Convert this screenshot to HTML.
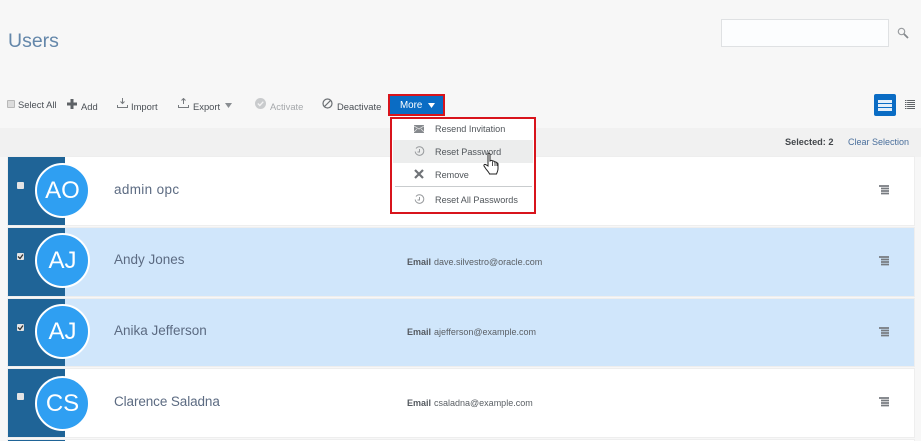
<!DOCTYPE html>
<html style="height:441px;overflow:hidden"><head><meta charset="utf-8">
<style>
html,body{margin:0;padding:0}
body{width:921px;height:441px;overflow:hidden;background:#f7f7f7;position:relative;font-family:"Liberation Sans",sans-serif;color:#4a4f55}
#w{position:absolute;left:0;top:0;width:921px;height:441px;overflow:hidden}
.a{position:absolute;white-space:nowrap}
.t{font-size:9.4px;line-height:12px;color:#4a4f55}
.row{position:absolute;left:8px;width:906px;height:67px;background:#fff;box-shadow:0 0 0 1px #eeeeee}
.row.s{background:#d0e6fb}
.band{position:absolute;left:0;top:0;width:57px;height:100%;background:#1f6497}
.cb{position:absolute;left:8.5px;top:25px;width:7px;height:7px;background:#e4e4e4;border-radius:1px;font-size:7px}
.av{position:absolute;left:27px;top:6px;width:51px;height:51px;border:2px solid #fff;border-radius:50%;background:#2f9ff2;color:#fff;font-size:24px;line-height:52px;text-align:center}
.n{position:absolute;left:106px;top:24px;font-size:13.5px;line-height:17px;color:#5c6b82;white-space:nowrap}
.e{position:absolute;left:399px;top:28px;font-size:9px;line-height:12px;color:#5a5f64;white-space:nowrap}
.e b{color:#555a60;margin-right:3px}
.mi{font-size:9.1px;line-height:12px;color:#50555a;position:absolute;white-space:nowrap}
</style></head><body><div id="w">
<div class="a" style="left:8px;top:28px;font-size:19.5px;line-height:26px;color:#6487aa">Users</div>

<div class="a" style="left:721px;top:19px;width:166px;height:26px;background:#fcfdfe;border:1px solid #dfe1e3"></div>
<svg class="a" style="left:897px;top:27px" width="12" height="12" viewBox="0 0 12 12"><circle cx="4.500" cy="4.500" r="3.200" fill="none" stroke="#9a9da0" stroke-width="1.200"/><path d="M7 7l4 4" stroke="#85898d" stroke-width="1.800"/></svg>

<div class="a" style="left:0;top:128px;width:921px;height:29px;background:#f1f1f1"></div>

<!-- toolbar -->
<div class="a" style="left:7px;top:100px;width:6px;height:6px;background:#dcdcdc;border:1px solid #b8b8b8;border-radius:1px"></div>
<div class="a t" style="left:18px;top:99px">Select All</div>
<svg class="a" style="left:66px;top:98px" width="12" height="12" viewBox="0 0 12 12"><path d="M4.500 1h3v3.500h3.500v3h-3.500v3.500h-3v-3.500h-3.500v-3h3.500z" fill="#5e6266"/></svg>
<div class="a t" style="left:81px;top:101px">Add</div>
<svg class="a" style="left:117px;top:98px" width="11" height="11" viewBox="0 0 11 11"><path d="M5.500 0v5M3.500 3.500l2 2 2-2M.5 7v2.500h10V7" fill="none" stroke="#777b7f" stroke-width="1"/></svg>
<div class="a t" style="left:131px;top:101px">Import</div>
<svg class="a" style="left:178px;top:98px" width="11" height="11" viewBox="0 0 11 11"><path d="M5.500 6V1M3.500 2.500l2-2 2 2M.5 7v2.500h10V7" fill="none" stroke="#777b7f" stroke-width="1"/></svg>
<div class="a t" style="left:193px;top:101px">Export</div>
<svg class="a" style="left:225px;top:103px" width="7" height="5"><path d="M0 0h7L3.500 5z" fill="#8a8e92"/></svg>
<svg class="a" style="left:255px;top:98px" width="11" height="11" viewBox="0 0 11 11"><circle cx="5.500" cy="5.500" r="5.500" fill="#c9cbcd"/><path d="M2.800 5.500l2 2 3.500-3.800" fill="none" stroke="#f3f3f3" stroke-width="1.300"/></svg>
<div class="a t" style="left:270px;top:101px;color:#a5a8ab">Activate</div>
<svg class="a" style="left:322px;top:98px" width="11" height="11" viewBox="0 0 11 11"><circle cx="5.500" cy="5.500" r="4.500" fill="none" stroke="#6a6e72" stroke-width="1.200"/><path d="M2.500 8.500l6-6" stroke="#6a6e72" stroke-width="1.200"/></svg>
<div class="a t" style="left:337px;top:101px">Deactivate</div>

<div class="a" style="left:388px;top:94px;width:53px;height:18px;border:2px solid #d8141c;background:#0a6cc4"></div>
<div class="a" style="left:400px;top:100px;font-size:9.800px;line-height:12px;color:#fff">More</div>
<svg class="a" style="left:428px;top:103px" width="7" height="5"><path d="M0 0h7L3.500 5z" fill="#fff"/></svg>

<div class="a" style="left:785px;top:136px;font-size:9.200px;line-height:12px;font-weight:bold;color:#44484c">Selected: 2</div>
<div class="a" style="left:848px;top:136px;font-size:9px;line-height:12px;color:#4a6f9c">Clear Selection</div>

<div class="a" style="left:874px;top:94px;width:22px;height:22px;border-radius:2px;background:#0a6cc4"></div>
<div class="a" style="left:878px;top:100px;width:14px;height:2.500px;background:#e4effa;box-shadow:0 4px 0 #e4effa,0 8px 0 #e4effa"></div>
<svg class="a" style="left:905px;top:100px" width="10" height="10"><path d="M0 .5h10M0 2.500h10M0 4.500h10M0 6.500h10M0 8.500h10" stroke="#5f6367" stroke-width="1" stroke-dasharray="1.500 .6 8"/></svg>

<!-- rows -->
<div class="row" style="top:157px;height:68px"><div class="band"></div><div class="cb"></div><div class="av">AO</div><div class="n" style="letter-spacing:.35px">admin opc</div></div>
<div class="row s" style="top:228px;height:68px"><div class="band"></div><div class="cb"><svg style="position:absolute;left:0;top:0" width="7" height="7"><path d="M1 3.500l2 2 3-4" fill="none" stroke="#333" stroke-width="1.300"/></svg></div><div class="av" style="top:5px">AJ</div><div class="n" style="top:23px">Andy Jones</div><div class="e"><b>Email</b>dave.silvestro@oracle.com</div></div>
<div class="row s" style="top:299px;height:67px"><div class="band"></div><div class="cb"><svg style="position:absolute;left:0;top:0" width="7" height="7"><path d="M1 3.500l2 2 3-4" fill="none" stroke="#333" stroke-width="1.300"/></svg></div><div class="av" style="top:5px">AJ</div><div class="n" style="top:23px">Anika Jefferson</div><div class="e" style="top:27px"><b>Email</b>ajefferson@example.com</div></div>
<div class="row" style="top:369px;height:68px"><div class="band"></div><div class="cb" style="top:24px"></div><div class="av" style="top:7px">CS</div><div class="n" style="letter-spacing:-.1px">Clarence Saladna</div><div class="e"><b>Email</b>csaladna@example.com</div></div>
<div class="row" style="top:440px;height:1px"><div class="band"></div></div>

<!-- row menu icons -->
<svg class="a" style="left:879px;top:185px" width="11" height="10"><path d="M0 1h10M2 3.500h8M2 6h8M2 8.500h8" stroke="#777b80" stroke-width="1.800"/></svg>
<svg class="a" style="left:879px;top:256px" width="11" height="10"><path d="M0 1h10M2 3.500h8M2 6h8M2 8.500h8" stroke="#777b80" stroke-width="1.800"/></svg>
<svg class="a" style="left:879px;top:327px" width="11" height="10"><path d="M0 1h10M2 3.500h8M2 6h8M2 8.500h8" stroke="#777b80" stroke-width="1.800"/></svg>
<svg class="a" style="left:879px;top:397px" width="11" height="10"><path d="M0 1h10M2 3.500h8M2 6h8M2 8.500h8" stroke="#777b80" stroke-width="1.800"/></svg>

<!-- dropdown -->
<div class="a" style="left:390px;top:117px;width:142px;height:93px;border:2px solid #d8141c;background:#fff">
  <div class="a" style="left:1px;top:21px;width:140px;height:23px;background:#eceded"></div>
  <svg class="a" style="left:22px;top:6px" width="10" height="8"><rect width="10" height="8" fill="#85898d"/><path d="M0 1l5 3 5-3M0 7l3-3M10 7l-3-3" stroke="#e0e0e0" fill="none" stroke-width=".8"/></svg>
  <svg class="a" style="left:22px;top:27px" width="11" height="11" viewBox="0 0 11 11"><path d="M2 2.500A4.300 4.300 0 1 1 1.200 5.500" fill="none" stroke="#989b9e" stroke-width="1"/><path d="M5.500 3v3h-2" fill="none" stroke="#989b9e"/></svg>
  <svg class="a" style="left:22px;top:50px" width="10" height="10"><path d="M1 1l8 8M9 1l-8 8" stroke="#6f7377" stroke-width="2.200"/></svg>
  <div class="a" style="left:3px;top:67px;width:137px;height:1px;background:#c9ccce"></div>
  <svg class="a" style="left:22px;top:75px" width="11" height="11" viewBox="0 0 11 11"><path d="M2 2.500A4.300 4.300 0 1 1 1.200 5.500" fill="none" stroke="#989b9e" stroke-width="1"/><path d="M5.500 3v3h-2" fill="none" stroke="#989b9e"/></svg>
  <div class="mi" style="left:43px;top:4px">Resend Invitation</div>
  <div class="mi" style="left:43px;top:27px">Reset Password</div>
  <div class="mi" style="left:43px;top:50px">Remove</div>
  <div class="mi" style="left:43px;top:75px">Reset All Passwords</div>
</div>

<!-- cursor -->
<svg class="a" style="left:483px;top:152px" width="18" height="23" viewBox="0 0 18 23"><path d="M5 1.500c1-.8 2 0 2 1V9l1-.5c.8-.3 1.500 0 1.700.8.600-.5 1.700-.3 2 .7.700-.4 1.700-.1 1.900.9.800-.2 1.400.3 1.400 1.100V17c0 2-1 3.500-1.500 5H6.500c-.5-1.500-2-3-3.500-5l-2-3c-.5-1 .5-2 1.500-1.500L5 14V2.500z" fill="#fff" stroke="#222" stroke-width="1"/><path d="M9.500 10v4M12 10.500V14M14 11.500V14" stroke="#222" stroke-width=".8"/></svg>
</div></body></html>
